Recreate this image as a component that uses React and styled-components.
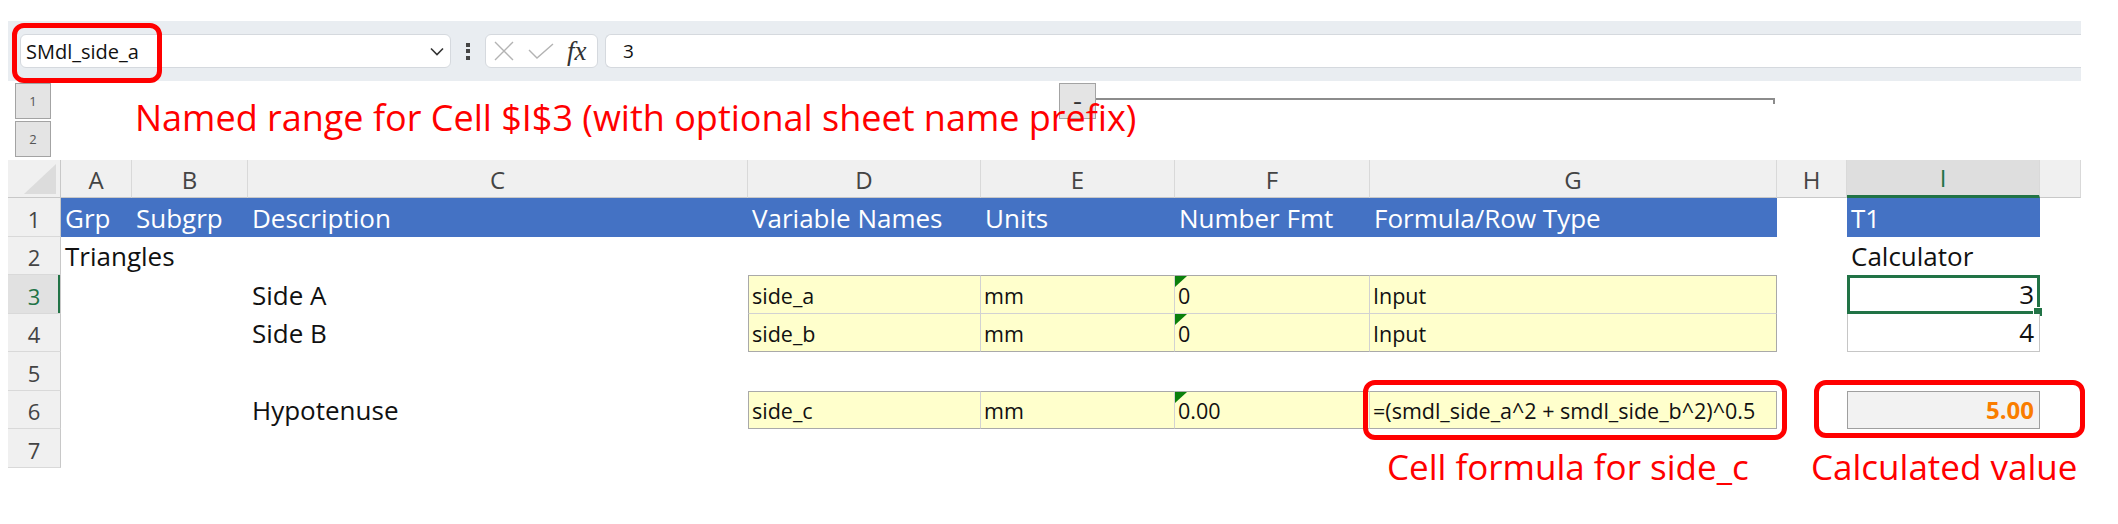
import React from 'react';
import styled, { createGlobalStyle } from 'styled-components';

// Excel-ish palette
const BLUE = '#4472c4';
const YELLOW = '#ffffcc';
const GREEN = '#217346';
const HEAD_BG = '#f0f0f0';
const HEAD_LINE = '#d9d9d9';
const EDGE = '#a9a9a9';
const INNER = '#d2d2d2';
const RED = '#ff0000';

const GlobalStyle = createGlobalStyle`
  html, body {
    margin: 0;
    padding: 0;
    background: #ffffff;
  }
  body {
    font-family: "Open Sans", "Noto Sans", sans-serif;
    color: #111111;
  }
  * {
    box-sizing: border-box;
  }
`;

const Page = styled.div`
  position: relative;
  width: 2118px;
  height: 524px;
  padding-top: 21px;
  overflow: hidden;
`;

/* ---------- formula bar ---------- */

const FormulaBar = styled.div`
  margin-left: 8px;
  width: 2073px;
  height: 60px;
  display: flex;
  align-items: center;
  padding-left: 12px;
  background: #e9edf1;
`;

const Field = styled.div`
  height: 34px;
  display: flex;
  align-items: center;
  background: #ffffff;
  border: 1px solid #d5d9de;
  border-radius: 6px;
`;

const NameBox = styled(Field)`
  width: 431px;
  flex: none;
  justify-content: space-between;
  padding: 0 6px 0 5px;
  font-size: 20px;
`;

const Grip = styled.div`
  display: flex;
  flex-direction: column;
  gap: 2.5px;
  margin: 0 15px;
  span {
    width: 4px;
    height: 4px;
    background: #444;
  }
`;

const FxBox = styled(Field)`
  width: 113px;
  flex: none;
  gap: 14px;
  padding-left: 8px;
`;

const Fx = styled.span`
  font-family: "Liberation Serif", "DejaVu Serif", serif;
  font-style: italic;
  font-size: 27px;
  color: #333;
  line-height: 1;
  margin-left: -1px;
`;

const Entry = styled(Field)`
  flex: 1;
  margin-left: 7px;
  padding-left: 17px;
  border-right: none;
  border-radius: 6px 0 0 6px;
  font-size: 19px;
`;

/* ---------- outline strip ---------- */

const OutlineBar = styled.div`
  height: 79px;
  display: flex;
  align-items: flex-start;
  padding-top: 2px;
`;

const Levels = styled.div`
  margin-left: 15px;
  display: flex;
  flex-direction: column;
  gap: 2px;
`;

const LevelButton = styled.div`
  width: 36px;
  height: 36px;
  display: flex;
  align-items: center;
  justify-content: center;
  background: #e4e4e4;
  border: 1px solid #a3a3a3;
  font-size: 13px;
  color: #555;
`;

const Group = styled.div`
  margin-left: 1008px;
  display: flex;
  align-items: flex-start;
`;

const Collapse = styled(LevelButton)`
  width: 37px;
  font-size: 16px;
  font-weight: 700;
  color: #333;
`;

const GroupLine = styled.div`
  position: relative;
  width: 679px;
  height: 2px;
  margin-top: 15px;
  background: #8c8c8c;
  &::after {
    content: '';
    position: absolute;
    right: 0;
    top: 0;
    width: 2px;
    height: 6px;
    background: #8c8c8c;
  }
`;

/* ---------- sheet grid ---------- */

const COLS = [53, 71, 116, 500, 233, 194, 195, 407, 70, 193, 41];
const LETTERS = ['A', 'B', 'C', 'D', 'E', 'F', 'G', 'H', 'I', ''];
const ROWS = [38, 39, 38, 39, 38, 39, 38, 39];

const Sheet = styled.div`
  margin-left: 8px;
  display: grid;
  grid-template-columns: ${COLS.map((c) => `${c}px`).join(' ')};
  grid-template-rows: ${ROWS.map((r) => `${r}px`).join(' ')};
`;

const Corner = styled.div`
  position: relative;
  background: ${HEAD_BG};
  border-right: 1px solid #c8c8c8;
  border-bottom: 1px solid #c8c8c8;
  &::after {
    content: '';
    position: absolute;
    right: 4px;
    bottom: 3px;
    width: 32px;
    height: 30px;
    background: #dcdcdc;
    clip-path: polygon(100% 0, 100% 100%, 0 100%);
  }
`;

const ColHead = styled.div`
  display: flex;
  align-items: flex-end;
  justify-content: center;
  padding-bottom: 1px;
  font-size: 24px;
  color: ${(p) => (p.$active ? GREEN : '#444')};
  background: ${(p) => (p.$active ? '#dedede' : HEAD_BG)};
  border-right: 1px solid ${HEAD_LINE};
  border-bottom: ${(p) => (p.$active ? `3px solid ${GREEN}` : '1px solid #c8c8c8')};
`;

const RowHead = styled.div`
  display: flex;
  align-items: flex-end;
  justify-content: center;
  padding-bottom: 2px;
  font-size: 22px;
  color: ${(p) => (p.$active ? GREEN : '#444')};
  background: ${(p) => (p.$active ? '#e1e1e1' : HEAD_BG)};
  border-bottom: 1px solid ${HEAD_LINE};
  border-right: 1px solid #c8c8c8;
  box-shadow: ${(p) => (p.$active ? `inset -2px 0 0 ${GREEN}` : 'none')};
`;

const Cell = styled.div`
  position: relative;
  display: flex;
  align-items: flex-end;
  justify-content: ${(p) => (p.$right ? 'flex-end' : 'flex-start')};
  padding: ${(p) => (p.$right ? '0 5px 1px 0' : '0 0 1px 4px')};
  min-width: 0;
  font-size: 26px;
  white-space: nowrap;
`;

const HeadCell = styled(Cell)`
  background: ${BLUE};
  color: #ffffff;
`;

const InputCell = styled(Cell)`
  background: ${YELLOW};
  font-size: 21.5px;
  padding-left: 3px;
  padding-bottom: 3px;
  border-top: ${(p) => (p.$top ? `1px solid ${EDGE}` : 'none')};
  border-bottom: 1px solid ${(p) => (p.$bottom ? EDGE : INNER)};
  border-left: ${(p) => (p.$first ? `1px solid ${EDGE}` : 'none')};
  border-right: 1px solid ${(p) => (p.$last ? EDGE : INNER)};
  &::before {
    content: '';
    display: ${(p) => (p.$flag ? 'block' : 'none')};
    position: absolute;
    left: 0;
    top: 0;
    width: 12px;
    height: 11px;
    background: #0b800b;
    clip-path: polygon(0 0, 100% 0, 0 100%);
  }
`;

const ValueCell = styled(Cell)`
  background: #ffffff;
  border: 1px solid #c6c6c6;
  border-top: ${(p) => (p.$top ? '1px solid #c6c6c6' : 'none')};
`;

const Selection = styled.div`
  position: absolute;
  inset: -1px;
  border: 3px solid ${GREEN};
  pointer-events: none;
  &::after {
    content: '';
    position: absolute;
    right: -6px;
    bottom: -6px;
    width: 8px;
    height: 8px;
    background: ${GREEN};
    border: 1px solid #ffffff;
  }
`;

const CalcCell = styled(Cell)`
  background: #f2f2f2;
  border: 1px solid #9f9f9f;
  font-size: 24px;
  font-weight: 700;
  color: #fa7d00;
  padding-bottom: 2px;
`;

/* ---------- callouts ---------- */

const Callout = styled.div`
  position: absolute;
  left: ${(p) => p.$x}px;
  top: ${(p) => p.$y}px;
  width: ${(p) => p.$w}px;
  height: ${(p) => p.$h}px;
  border: 5px solid ${RED};
  border-radius: 12px;
  pointer-events: none;
`;

const Note = styled.div`
  position: absolute;
  left: ${(p) => p.$x}px;
  top: ${(p) => p.$y}px;
  font-size: ${(p) => p.$size}px;
  line-height: 1;
  color: ${RED};
  white-space: nowrap;
`;

/* ---------- data ---------- */

const yellow = (text, opts = {}) => ({ kind: 'input', text, ...opts });
const head = (text) => ({ kind: 'head', text });

const DATA = [
  [head('Grp'), head('Subgrp'), head('Description'), head('Variable Names'), head('Units'),
    head('Number Fmt'), head('Formula/Row Type'), null, head('T1'), null],
  [{ text: 'Triangles' }, null, null, null, null, null, null, null, { text: 'Calculator' }, null],
  [null, null, { text: 'Side A' },
    yellow('side_a', { top: true, first: true }), yellow('mm', { top: true }),
    yellow('0', { top: true, flag: true }), yellow('Input', { top: true, last: true }),
    null, { kind: 'value', text: '3', top: true, selected: true }, null],
  [null, null, { text: 'Side B' },
    yellow('side_b', { bottom: true, first: true }), yellow('mm', { bottom: true }),
    yellow('0', { bottom: true, flag: true }), yellow('Input', { bottom: true, last: true }),
    null, { kind: 'value', text: '4' }, null],
  [null, null, null, null, null, null, null, null, null, null],
  [null, null, { text: 'Hypotenuse' },
    yellow('side_c', { top: true, bottom: true, first: true }),
    yellow('mm', { top: true, bottom: true }),
    yellow('0.00', { top: true, bottom: true, flag: true }),
    yellow('=(smdl_side_a^2 + smdl_side_b^2)^0.5', { top: true, bottom: true, last: true }),
    null, { kind: 'calc', text: '5.00' }, null],
  [null, null, null, null, null, null, null, null, null, null],
];

function renderCell(cell, key) {
  if (!cell) return <Cell key={key} />;
  if (cell.kind === 'head') return <HeadCell key={key}>{cell.text}</HeadCell>;
  if (cell.kind === 'input') {
    return (
      <InputCell key={key} $top={cell.top} $bottom={cell.bottom} $first={cell.first}
        $last={cell.last} $flag={cell.flag}>
        {cell.text}
      </InputCell>
    );
  }
  if (cell.kind === 'value') {
    return (
      <ValueCell key={key} $right $top={cell.top}>
        {cell.text}
        {cell.selected && <Selection />}
      </ValueCell>
    );
  }
  if (cell.kind === 'calc') return <CalcCell key={key} $right>{cell.text}</CalcCell>;
  return <Cell key={key}>{cell.text}</Cell>;
}

function CancelIcon() {
  return (
    <svg width="20" height="20" viewBox="0 0 20 20">
      <path d="M1 1 L19 19 M19 1 L1 19" stroke="#b3b3b3" strokeWidth="1.4" fill="none" />
    </svg>
  );
}

function EnterIcon() {
  return (
    <svg width="26" height="16" viewBox="0 0 26 16">
      <path d="M1 7 L9 15 L25 1" stroke="#b3b3b3" strokeWidth="1.4" fill="none" />
    </svg>
  );
}

function Chevron() {
  return (
    <svg width="14" height="9" viewBox="0 0 14 9">
      <path d="M1 1.5 L7 7.5 L13 1.5" stroke="#333" strokeWidth="1.6" fill="none" />
    </svg>
  );
}

export default function App() {
  return (
    <Page>
      <GlobalStyle />
      <FormulaBar>
        <NameBox>
          <span>SMdl_side_a</span>
          <Chevron />
        </NameBox>
        <Grip><span /><span /><span /></Grip>
        <FxBox>
          <CancelIcon />
          <EnterIcon />
          <Fx>fx</Fx>
        </FxBox>
        <Entry>3</Entry>
      </FormulaBar>

      <OutlineBar>
        <Levels>
          <LevelButton>1</LevelButton>
          <LevelButton>2</LevelButton>
        </Levels>
        <Group>
          <Collapse>–</Collapse>
          <GroupLine />
        </Group>
      </OutlineBar>

      <Sheet>
        <Corner />
        {LETTERS.map((l, i) => (
          <ColHead key={`h${i}`} $active={l === 'I'}>{l}</ColHead>
        ))}
        {DATA.map((row, r) => (
          <React.Fragment key={`r${r}`}>
            <RowHead $active={r === 2}>{r + 1}</RowHead>
            {row.map((cell, c) => renderCell(cell, `c${r}-${c}`))}
          </React.Fragment>
        ))}
      </Sheet>

      <Callout $x={12} $y={23} $w={150} $h={60} />
      <Callout $x={1363} $y={380} $w={424} $h={60} />
      <Callout $x={1814} $y={380} $w={271} $h={58} />

      <Note $x={135} $y={100} $size={36}>
        Named range for Cell $I$3 (with optional sheet name prefix)
      </Note>
      <Note $x={1387} $y={449} $size={35}>Cell formula for side_c</Note>
      <Note $x={1811} $y={449} $size={35}>Calculated value</Note>
    </Page>
  );
}
